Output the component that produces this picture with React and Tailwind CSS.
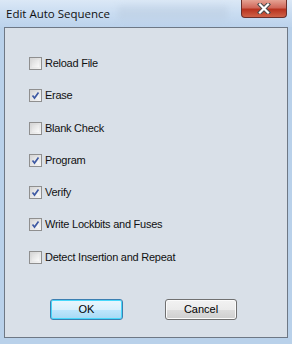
import React from "react";

function Check({ checked }) {
  return (
    <div className="w-[13px] h-[13px] border border-[#8f8f8f] bg-[linear-gradient(135deg,#d4d4d4,#f6f6f6)] p-[2px] shrink-0">
      <div className="w-full h-full bg-[linear-gradient(135deg,#dcdcdc,#fafafa)] relative">
        {checked && (
          <svg width="11" height="11" viewBox="0 0 11 11" className="absolute left-[-2px] top-[-2px]">
            <path d="M2.5 5.5 L4.5 8 L8.5 2.5" fill="none" stroke="#3f5aa3" strokeWidth="1.7" />
          </svg>
        )}
      </div>
    </div>
  );
}

function Row({ label, checked }) {
  return (
    <div className="flex items-center gap-[3px] h-[13px]">
      <Check checked={checked} />
      <span className="text-[11px] leading-none text-[#111] tracking-[-0.25px]">{label}</span>
    </div>
  );
}

export default function App() {
  const items = [
    ["Reload File", false],
    ["Erase", true],
    ["Blank Check", false],
    ["Program", true],
    ["Verify", true],
    ["Write Lockbits and Fuses", true],
    ["Detect Insertion and Repeat", false],
  ];
  return (
    <div
      className="w-[292px] h-[344px] flex flex-col bg-[#b9d1ea] overflow-hidden"
      style={{ fontFamily: '"Liberation Sans", Arial, sans-serif' }}
    >
      <div className="h-[27px] shrink-0 relative bg-[linear-gradient(180deg,#dbe8f6_0%,#c9dcf1_50%,#bcd3ec_100%)]">
        <div className="absolute left-[118px] top-[6px] w-[110px] h-[14px] bg-[#b8c8db] opacity-40 blur-[3px]" />
        <span
          className="absolute left-[6px] top-[5px] text-[11.5px] text-[#101010]"
          style={{ fontFamily: '"Open Sans", "Noto Sans", sans-serif' }}
        >
          Edit Auto Sequence
        </span>
        <div className="absolute left-[241px] top-0 w-[46px] h-[18px] rounded-b-[4px] border border-t-0 border-[#6b2f2a] bg-[linear-gradient(180deg,#e5a293_0%,#d0685a_45%,#b8331f_55%,#cf6248_100%)] flex items-center justify-center">
          <svg width="14" height="11" viewBox="0 0 14 11">
            <path d="M3 1.5 L11 9.5 M11 1.5 L3 9.5" stroke="#4a4a4a" strokeWidth="4.2" strokeLinecap="square" />
            <path d="M3 1.5 L11 9.5 M11 1.5 L3 9.5" stroke="#ffffff" strokeWidth="2.2" strokeLinecap="square" />
          </svg>
        </div>
      </div>
      <div className="mx-[4px] mb-[6px] flex-1 border border-[#6e7885] bg-[#d9e0e8] flex flex-col">
        <div className="pl-[24px] pt-[29px] flex flex-col gap-[19.3px]">
          {items.map(([l, c]) => (
            <Row key={l} label={l} checked={c} />
          ))}
        </div>
        <div className="flex pl-[45px] gap-[42px] mt-[35px]">
          <button className="w-[73px] h-[21px] rounded-[3px] border border-[#3c7fb1] shadow-[inset_0_0_0_1px_#48d8fb] bg-[linear-gradient(180deg,#eaf6fd_0%,#d9f0fc_50%,#bee6fd_51%,#a7d9f5_100%)] text-[11px] text-black">
            OK
          </button>
          <button className="w-[72px] h-[21px] rounded-[3px] border border-[#707070] shadow-[inset_0_0_0_1px_#fbfbfb] bg-[linear-gradient(180deg,#f2f2f2_0%,#ebebeb_50%,#dddddd_51%,#cfcfcf_100%)] text-[11px] text-black">
            Cancel
          </button>
        </div>
      </div>
    </div>
  );
}
